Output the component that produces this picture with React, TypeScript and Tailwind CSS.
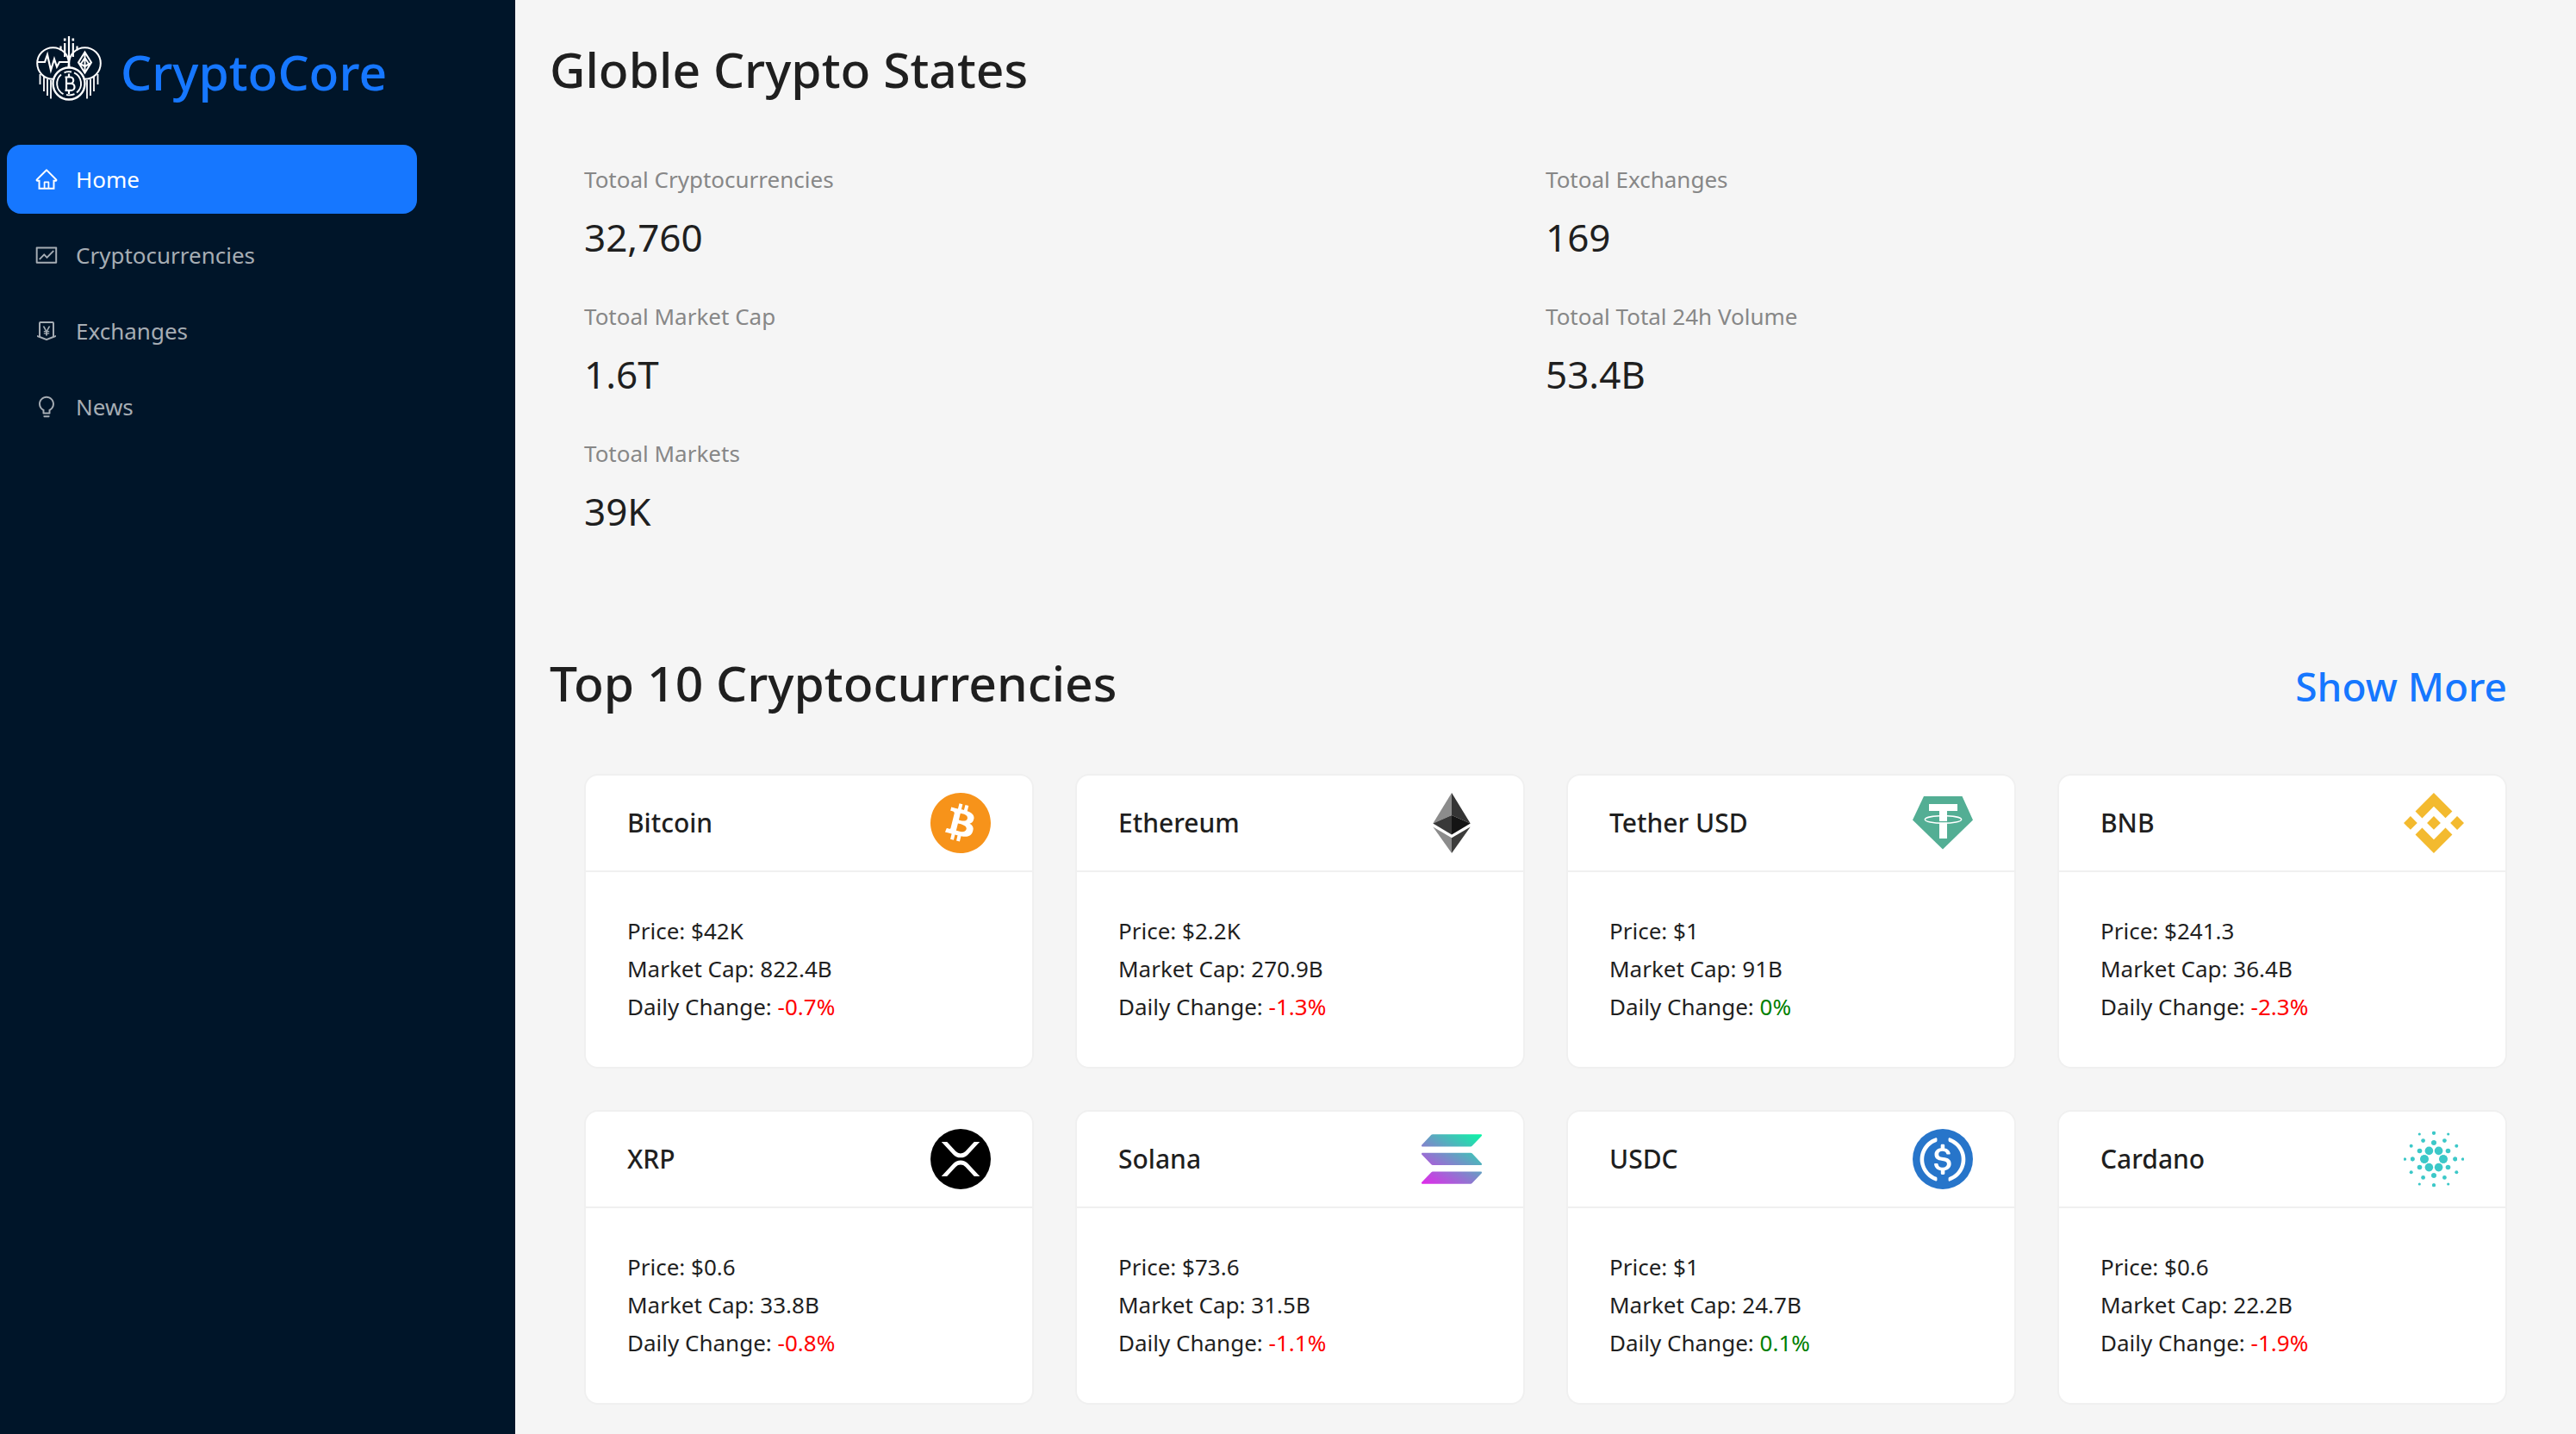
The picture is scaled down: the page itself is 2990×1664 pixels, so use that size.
import type { ReactNode } from "react";
import { AiOutlineBulb, AiOutlineFund, AiOutlineHome, AiOutlineMoneyCollect } from "react-icons/ai";
import { SiBinance, SiBitcoin } from "react-icons/si";

function BrandLogo() {
  return (
    <svg viewBox="0 0 80 80" className="size-20 shrink-0" fill="none" stroke="#fff" strokeWidth="2" aria-hidden="true">
      <path d="M40 2v28M35.2 10v16M44.8 10v16M30.5 13.5v5M49.5 13.5v5" strokeWidth="2.2" />
      <path d="M35.2 4.5v3M44.8 4.5v3" strokeWidth="2.6" />
      <circle cx="21.5" cy="33.5" r="18.3" />
      <circle cx="58.5" cy="33.5" r="18.3" />
      <path d="M4 32h8l3-8.500 4 18 4-13 3 9 3-5.500h10" strokeWidth="2.2" />
      <path d="M58.500 20.500l7.500 12-7.500 12-7.500-12zM58.500 20v25M51 33l7.500 4 7.500-4M54 34l4.500-7 4.500 7" strokeWidth="2" />
      <path d="M6.500 46v12M11 49v17M15 52v19M19 53v21.500M73.500 46v12M69 49v17M65 52v19M61 53v21.500" strokeWidth="1.8" />
      <circle cx="40" cy="57" r="18.5" fill="#001529" strokeWidth="2.4" />
      <path d="M31 46.500a13.800 13.800 0 0 0 2.500 22.700M37 69.800a13.800 13.800 0 0 0 9.500-.6M49 67.500a13.800 13.800 0 0 0-3-23.200M43 43.500a13.800 13.800 0 0 0-8.500.8" strokeWidth="1.900" />
      <path d="M35.500 49.500h6a3.700 3.700 0 0 1 0 7.400h-4.500h5.500a4 4 0 0 1 0 8h-7M37 49.500v15.400M40 45.500v4M40 65v4" strokeWidth="2.2" />
    </svg>
  );
}

function BitcoinIcon() {
  return <SiBitcoin className="size-[70px]" color="#f7931a" aria-hidden="true" />;
}

function EthereumIcon() {
  return (
    <svg viewBox="0 0 70 70" className="size-[70px]" aria-hidden="true">
      <path d="M35 0L13.300 35.500 35 26z" fill="#8c8c8c" />
      <path d="M35 0v26l21.700 9.500z" fill="#343434" />
      <path d="M13.300 35.500L35 48.500V26z" fill="#393939" />
      <path d="M35 26v22.500l21.700-13z" fill="#141414" />
      <path d="M13.300 39.500L35 70V52.300z" fill="#8c8c8c" />
      <path d="M35 52.300V70l21.700-30.500z" fill="#3c3c3b" />
    </svg>
  );
}

function TetherIcon() {
  return (
    <svg viewBox="0 0 70 70" className="size-[70px]" aria-hidden="true">
      <path d="M13 4h44.500L70 31.500 35 65.500 0 31.500z" fill="#53ae94" />
      <path d="M19 13h33v8H19zM31 21h9v32h-9z" fill="#fff" />
      <path d="M31 33.700h9" stroke="#53ae94" strokeWidth="1.600" />
      <path d="M40 26.800c9.500.4 16.700 2.100 16.700 4.200 0 2.400-9.500 4.300-21.300 4.300S14.300 33.400 14.300 31c0-2.100 7.200-3.800 16.700-4.200" fill="none" stroke="#fff" strokeWidth="1.400" />
    </svg>
  );
}

function BnbIcon() {
  return <SiBinance className="size-[70px]" color="#f3ba2f" aria-hidden="true" />;
}

function XrpIcon() {
  return (
    <svg viewBox="0 0 70 70" className="size-[70px]" aria-hidden="true">
      <circle cx="35" cy="35" r="35" />
      <g transform="translate(12.700 15) scale(.0871 .0943)" fill="#fff">
        <path d="M437 0h74L357 152.480c-55.770 55.190-146.190 55.190-202 0L.94 0H75l117 115.830a91.110 91.110 0 0 0 127.910 0z" />
        <path d="M74.050 424H0l155-153.420c55.770-55.190 146.190-55.190 202 0L512 424h-74L320 308a91.110 91.110 0 0 0-127.910 0z" />
      </g>
    </svg>
  );
}

function SolanaIcon() {
  return (
    <svg viewBox="0 -43 397.7 397.7" className="size-[70px]" aria-hidden="true">
      <defs>
        <linearGradient id="solana" gradientUnits="userSpaceOnUse" x1="371" y1="-37" x2="100" y2="400">
          <stop offset="0" stopColor="#00ffa3" />
          <stop offset="1" stopColor="#ec1fee" />
        </linearGradient>
      </defs>
      <g fill="url(#solana)" transform="translate(0 -8) scale(1 1.050)">
        <path d="M64.600 237.900c2.400-2.400 5.700-3.800 9.200-3.800h317.400c5.800 0 8.700 7 4.600 11.100l-62.700 62.700c-2.400 2.400-5.700 3.800-9.200 3.800H6.500c-5.800 0-8.700-7-4.600-11.100z" />
        <path d="M64.600 3.800C67.100 1.400 70.400 0 73.800 0h317.400c5.800 0 8.700 7 4.600 11.100l-62.700 62.700c-2.400 2.400-5.700 3.800-9.200 3.800H6.500c-5.800 0-8.700-7-4.600-11.100z" />
        <path d="M333.100 120.100c-2.400-2.400-5.700-3.800-9.200-3.800H6.500c-5.800 0-8.700 7-4.600 11.100l62.700 62.700c2.400 2.400 5.700 3.800 9.200 3.800h317.400c5.800 0 8.700-7 4.600-11.100z" />
      </g>
    </svg>
  );
}

function UsdcIcon() {
  return (
    <svg viewBox="0 0 2000 2000" className="size-[70px]" aria-hidden="true">
      <circle cx="1000" cy="1000" r="1000" fill="#2775ca" />
      <g fill="#fff">
        <path d="M1275 1158.330c0-145.830-87.500-195.830-262.500-216.660-125-16.670-150-50-150-108.340s41.670-95.830 125-95.830c75 0 116.670 25 137.500 87.500 4.170 12.500 16.670 20.830 29.170 20.830h66.660c16.670 0 29.170-12.500 29.170-29.160v-4.170c-16.670-91.670-91.670-162.500-187.500-170.830v-100c0-16.670-12.500-29.170-33.330-33.340h-62.500c-16.670 0-29.170 12.500-33.340 33.340v95.830c-125 16.670-204.160 100-204.160 204.170 0 137.500 83.330 191.660 258.330 212.500 116.670 20.830 154.170 45.830 154.170 112.500s-58.340 112.500-137.500 112.500c-108.340 0-145.840-45.840-158.340-108.340-4.160-16.660-16.660-25-29.160-25h-70.840c-16.660 0-29.160 12.500-29.160 29.170v4.170c16.660 104.160 83.330 179.160 220.830 200v100c0 16.660 12.500 29.160 33.330 33.330h62.500c16.670 0 29.170-12.500 33.340-33.330v-100c125-20.840 208.330-108.340 208.330-220.840z" />
        <path d="M787.500 1595.830c-325-116.660-491.670-479.160-370.830-800 62.500-175 200-308.330 370.830-370.830 16.670-8.330 25-20.830 25-41.670V325c0-16.670-8.330-29.170-25-33.330-4.170 0-12.500 0-16.670 4.160-395.830 125-612.500 545.840-487.500 941.670 75 233.330 254.170 412.500 487.500 487.500 16.670 8.330 33.340 0 37.500-16.670 4.170-4.160 4.170-8.330 4.170-16.660v-58.340c0-12.500-12.500-29.160-25-37.500zM1229.170 295.830c-16.670-8.330-33.340 0-37.500 16.670-4.170 4.170-4.170 8.330-4.170 16.670v58.330c0 16.670 12.500 33.330 25 41.670 325 116.660 491.670 479.160 370.830 800-62.500 175-200 308.330-370.830 370.830-16.670 8.330-25 20.830-25 41.670V1700c0 16.670 8.330 29.170 25 33.330 4.170 0 12.500 0 16.670-4.160 395.830-125 612.500-545.840 487.500-941.670-75-237.500-258.340-416.670-487.500-491.670z" />
      </g>
    </svg>
  );
}

const cardanoDots: [number, number, number][] = [
  [11, 0, 4.8], [5.6, 9.6, 4.8],
  [16.5, 9.5, 2.8], [0, 19, 2.8],
  [12.4, 21.4, 2.4], [24.700, 0, 2.4],
  [26.300, 15.200, 2], [0, 30.200, 2],
  [16.700, 29, 1.600], [33.500, 0, 1.600],
];

function CardanoIcon() {
  return (
    <svg viewBox="-35 -35 70 70" className="size-[70px]" fill="#3cc8c8" aria-hidden="true">
      {cardanoDots.flatMap(([x, y, r]) =>
        [[x, y], [-x, y], [x, -y], [-x, -y]].map(([cx, cy], i) => (
          <circle key={`${x}-${y}-${i}`} cx={cx} cy={cy} r={r} />
        )),
      )}
    </svg>
  );
}

const menu: { label: string; icon: ReactNode; active?: boolean }[] = [
  { label: "Home", icon: <AiOutlineHome />, active: true },
  { label: "Cryptocurrencies", icon: <AiOutlineFund /> },
  { label: "Exchanges", icon: <AiOutlineMoneyCollect /> },
  { label: "News", icon: <AiOutlineBulb /> },
];

const stats = [
  { label: "Totoal Cryptocurrencies", value: "32,760" },
  { label: "Totoal Exchanges", value: "169" },
  { label: "Totoal Market Cap", value: "1.6T" },
  { label: "Totoal Total 24h Volume", value: "53.4B" },
  { label: "Totoal Markets", value: "39K" },
];

const coins = [
  { name: "Bitcoin", icon: <BitcoinIcon />, price: "42K", cap: "822.4B", change: -0.7 },
  { name: "Ethereum", icon: <EthereumIcon />, price: "2.2K", cap: "270.9B", change: -1.3 },
  { name: "Tether USD", icon: <TetherIcon />, price: "1", cap: "91B", change: 0 },
  { name: "BNB", icon: <BnbIcon />, price: "241.3", cap: "36.4B", change: -2.3 },
  { name: "XRP", icon: <XrpIcon />, price: "0.6", cap: "33.8B", change: -0.8 },
  { name: "Solana", icon: <SolanaIcon />, price: "73.6", cap: "31.5B", change: -1.1 },
  { name: "USDC", icon: <UsdcIcon />, price: "1", cap: "24.7B", change: 0.1 },
  { name: "Cardano", icon: <CardanoIcon />, price: "0.6", cap: "22.2B", change: -1.9 },
];

function Sidebar() {
  return (
    <aside className="w-1/5 shrink-0 bg-[#001529]">
      <a href="#" className="flex gap-5 px-10 pt-10 text-[57px] leading-[86px] font-medium text-[#1677ff]">
        <BrandLogo />
        CryptoCore
      </a>
      <nav className="mt-[42px] mr-[114px] ml-2 flex flex-col gap-2">
        {menu.map((item) => (
          <a
            key={item.label}
            href="#"
            aria-current={item.active ? "page" : undefined}
            className={`flex h-20 items-center gap-5 rounded-2xl px-8 ${
              item.active ? "bg-[#1677ff] text-white" : "text-[#a6adb4]"
            }`}
          >
            <span className="text-[28px]">{item.icon}</span>
            {item.label}
          </a>
        ))}
      </nav>
    </aside>
  );
}

export default function App() {
  return (
    <div className="flex min-h-screen bg-[#f5f5f5] font-['Noto_Sans',sans-serif] text-[26px] leading-[44px] text-[#1f1f1f]">
      <Sidebar />
      <main className="min-w-0 flex-1 px-10 pt-10 pb-8">
        <h1 className="text-[57px] leading-[80px] font-medium">Globle Crypto States</h1>
        <dl className="mt-[66px] grid grid-cols-2 gap-y-8 px-10">
          {stats.map((stat) => (
            <div key={stat.label}>
              <dt className="text-[#878787]">{stat.label}</dt>
              <dd className="mt-2 text-[44px] leading-[75px]">{stat.value}</dd>
            </div>
          ))}
        </dl>

        <div className="mt-[121px] flex items-baseline justify-between pr-10">
          <h2 className="text-[57px] leading-[80px] font-medium">Top 10 Cryptocurrencies</h2>
          <a href="#" className="text-[46px] font-medium text-[#1677ff]">Show More</a>
        </div>
        <div className="mt-[66px] grid grid-cols-4 gap-12 px-10">
          {coins.map((coin) => (
            <a key={coin.name} href="#" className="block rounded-2xl border-2 border-[#f0f0f0] bg-white">
              <div className="flex h-28 items-center justify-between border-b-2 border-[#f0f0f0] px-12">
                <h3 className="text-[30px] font-medium">{coin.name}</h3>
                {coin.icon}
              </div>
              <div className="px-12 pt-[46px] pb-12">
                <p>Price: ${coin.price}</p>
                <p>Market Cap: {coin.cap}</p>
                <p>
                  Daily Change:{" "}
                  <span className={coin.change < 0 ? "text-[#ff0000]" : "text-[#008000]"}>{coin.change}%</span>
                </p>
              </div>
            </a>
          ))}
        </div>
      </main>
    </div>
  );
}
